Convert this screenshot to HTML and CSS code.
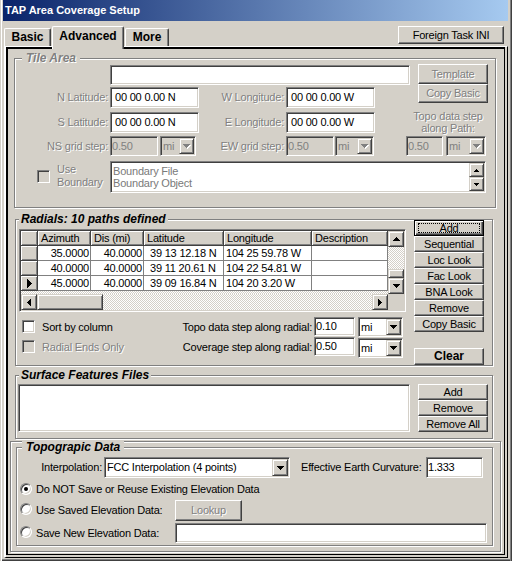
FILE: index.html
```html
<!DOCTYPE html>
<html>
<head>
<meta charset="utf-8">
<title>TAP Area Coverage Setup</title>
<link rel="stylesheet" href="styles.css">
</head>
<body>
<div class="window">
  <div class="titlebar">TAP Area Coverage Setup</div>
  <div class="tabrow">
    <div class="tab t-basic">Basic</div>
    <div class="tab t-adv">Advanced</div>
    <div class="tab t-more">More</div>
    <div class="btn fti">Foreign Task INI</div>
  </div>
  <div class="page">
    <div class="pin">

      <div class="group g-tile">
        <div class="gtitle dis">Tile Area</div>
        <div class="row r-a">
          <div class="tb tb-name"></div>
          <div class="tile-btns">
            <div class="btn dis b-tmpl">Template</div>
            <div class="btn dis b-cpy">Copy Basic</div>
          </div>
        </div>
        <div class="row r-b">
          <div class="lbl dis lw95">N Latitude:</div>
          <div class="tb tb-coord">00 00 0.00 N</div>
          <div class="lbl dis lw87">W Longitude:</div>
          <div class="tb tb-coord">00 00 0.00 W</div>
        </div>
        <div class="row r-c">
          <div class="lbl dis lw95">S Latitude:</div>
          <div class="tb tb-coord">00 00 0.00 N</div>
          <div class="lbl dis lw87">E Longitude:</div>
          <div class="tb tb-coord">00 00 0.00 W</div>
          <div class="topo-path dis">Topo data step<br>along Path:</div>
        </div>
        <div class="row r-d">
          <div class="lbl dis lw95 lh20">NS grid step:</div>
          <div class="tb off tb-step">0.50</div>
          <div class="combo off cb-ns"><span class="cv">mi</span><span class="dd"><svg width="7" height="4" viewBox="0 0 7 4" shape-rendering="crispEdges"><path d="M0 0h7v1H6v1H5v1H4v1H3V3H2V2H1V1H0z"/></svg></span></div>
          <div class="lbl dis lw90 lh20">EW grid step:</div>
          <div class="tb off tb-step">0.50</div>
          <div class="combo off cb-ew"><span class="cv">mi</span><span class="dd"><svg width="7" height="4" viewBox="0 0 7 4" shape-rendering="crispEdges"><path d="M0 0h7v1H6v1H5v1H4v1H3V3H2V2H1V1H0z"/></svg></span></div>
          <div class="tb off tb-pstep">0.50</div>
          <div class="combo off cb-p"><span class="cv">mi</span><span class="dd"><svg width="7" height="4" viewBox="0 0 7 4" shape-rendering="crispEdges"><path d="M0 0h7v1H6v1H5v1H4v1H3V3H2V2H1V1H0z"/></svg></span></div>
        </div>
        <div class="row r-e">
          <div class="chk off chk-ub"></div>
          <div class="ublbl dis">Use<br>Boundary</div>
          <div class="lb lb-bnd">
            <div class="lbitems"><div>Boundary File</div><div>Boundary Object</div></div>
            <div class="lbsb">
              <div class="sbtn sb14"><svg width="5" height="3" viewBox="0 0 5 3" shape-rendering="crispEdges"><path d="M2 0h1v1h1v1h1v1H0V2h1V1h1z"/></svg></div>
              <div class="sbtn sb14"><svg width="5" height="3" viewBox="0 0 5 3" shape-rendering="crispEdges"><path d="M0 0h5v1H4v1H3v1H2V2H1V1H0z"/></svg></div>
            </div>
          </div>
        </div>
      </div>

      <div class="group g-rad">
        <div class="gtitle">Radials: 10 paths defined</div>
        <div class="radbody">
          <div class="radl">
            <div class="grid">
              <div class="gtop">
                <div class="cells">
                  <div class="c fx"></div>
                  <div class="c fx">Azimuth</div>
                  <div class="c fx">Dis (mi)</div>
                  <div class="c fx">Latitude</div>
                  <div class="c fx">Longitude</div>
                  <div class="c fx">Description</div>

                  <div class="c fx"></div>
                  <div class="c num">35.0000</div>
                  <div class="c num">40.0000</div>
                  <div class="c lat">39 13 12.18 N</div>
                  <div class="c">104 25 59.78 W</div>
                  <div class="c"></div>

                  <div class="c fx"></div>
                  <div class="c num">40.0000</div>
                  <div class="c num">40.0000</div>
                  <div class="c lat">39 11 20.61 N</div>
                  <div class="c">104 22 54.81 W</div>
                  <div class="c"></div>

                  <div class="c fx ind"><svg width="5" height="9" viewBox="0 0 5 9" shape-rendering="crispEdges"><path d="M0 0h1v1h1v1h1v1h1v1h1v1H4v1H3v1H2v1H1v1H0z"/></svg></div>
                  <div class="c num">45.0000</div>
                  <div class="c num">40.0000</div>
                  <div class="c lat">39 09 16.84 N</div>
                  <div class="c">104 20 3.20 W</div>
                  <div class="c"></div>
                </div>
                <div class="vsb">
                  <div class="sbtn sb16"><svg width="7" height="4" viewBox="0 0 7 4" shape-rendering="crispEdges"><path d="M3 0h1v1h1v1h1v1h1v1H0V3h1V2h1V1h1z"/></svg></div>
                  <div class="track vtrack"></div>
                  <div class="sbtn vthumb"></div>
                  <div class="sbtn sb16"><svg width="7" height="4" viewBox="0 0 7 4" shape-rendering="crispEdges"><path d="M0 0h7v1H6v1H5v1H4v1H3V3H2V2H1V1H0z"/></svg></div>
                </div>
              </div>
              <div class="gbot">
                <div class="hsb">
                  <div class="sbtn sb16"><svg width="4" height="7" viewBox="0 0 4 7" shape-rendering="crispEdges"><path d="M3 0h1v7H3V6H2V5H1V4H0V3h1V2h1V1h1z"/></svg></div>
                  <div class="sbtn hthumb"></div>
                  <div class="track htrack"></div>
                  <div class="sbtn sb16"><svg width="4" height="7" viewBox="0 0 4 7" shape-rendering="crispEdges"><path d="M0 0h1v1h1v1h1v1h1v1H3v1H2v1H1v1H0z"/></svg></div>
                </div>
                <div class="corner"></div>
              </div>
            </div>
            <div class="urow u1">
              <div class="chk ucb"></div>
              <div class="cbl">Sort by column</div>
              <div class="rlab">Topo data step along radial:</div>
              <div class="tb tb-rs">0.10</div>
              <div class="combo cb-rs"><span class="cv">mi</span><span class="dd"><svg width="7" height="4" viewBox="0 0 7 4" shape-rendering="crispEdges"><path d="M0 0h7v1H6v1H5v1H4v1H3V3H2V2H1V1H0z"/></svg></span></div>
            </div>
            <div class="urow u2">
              <div class="chk off ucb"></div>
              <div class="cbl dis">Radial Ends Only</div>
              <div class="rlab">Coverage step along radial:</div>
              <div class="tb tb-rs">0.50</div>
              <div class="combo cb-rs cb-low"><span class="cv">mi</span><span class="dd"><svg width="7" height="4" viewBox="0 0 7 4" shape-rendering="crispEdges"><path d="M0 0h7v1H6v1H5v1H4v1H3V3H2V2H1V1H0z"/></svg></span></div>
            </div>
          </div>
          <div class="radr">
            <div class="btn b16 def"><span class="focus">Add</span></div>
            <div class="btn b16">Sequential</div>
            <div class="btn b16">Loc Look</div>
            <div class="btn b16">Fac Look</div>
            <div class="btn b16">BNA Look</div>
            <div class="btn b16">Remove</div>
            <div class="btn b16">Copy Basic</div>
            <div class="btn b-clear">Clear</div>
          </div>
        </div>
      </div>

      <div class="group g-surf">
        <div class="gtitle">Surface Features Files</div>
        <div class="row">
          <div class="lb lb-surf"></div>
          <div class="surf-btns">
            <div class="btn b16">Add</div>
            <div class="btn b16">Remove</div>
            <div class="btn b16">Remove All</div>
          </div>
        </div>
      </div>

      <div class="panel">
        <div class="group g-topo">
          <div class="gtitle">Topograpic Data</div>
          <div class="row tr1">
            <div class="lbl lw87i lh20">Interpolation:</div>
            <div class="combo cb-int"><span class="cv">FCC Interpolation (4 points)</span><span class="dd dd16"><svg width="7" height="4" viewBox="0 0 7 4" shape-rendering="crispEdges"><path d="M0 0h7v1H6v1H5v1H4v1H3V3H2V2H1V1H0z"/></svg></span></div>
            <div class="eec">Effective Earth Curvature:</div>
            <div class="tb tb-eec">1.333</div>
          </div>
          <div class="row rr rr1">
            <div class="radio on"></div>
            <div class="rtext">Do NOT Save or Reuse Existing Elevation Data</div>
          </div>
          <div class="row rr rr2">
            <div class="radio"></div>
            <div class="rtext rtw">Use Saved Elevation Data:</div>
            <div class="btn dis b-look">Lookup</div>
          </div>
          <div class="row rr rr3">
            <div class="radio"></div>
            <div class="rtext rtw">Save New Elevation Data:</div>
            <div class="tb tb-save"></div>
          </div>
        </div>
      </div>

    </div>
  </div>
</div>
</body>
</html>
```

FILE: styles.css
```css
* { box-sizing: border-box; }
html, body { margin: 0; padding: 0; }
body {
  width: 512px; height: 561px; overflow: hidden;
  background: #d4d0c8;
  font-family: "Liberation Sans", Arial, sans-serif;
  font-size: 11px; line-height: 13px; letter-spacing: -0.2px;
  color: #000;
}
.window {
  width: 512px; height: 561px;
  box-shadow: inset 1px 0 #d4d0c8, inset 2px 0 #fff,
              inset -1px 0 #404040, inset -2px 0 #808080,
              inset 0 -1px #404040, inset 0 -2px #808080;
}
.titlebar {
  margin: 0 4px 0 3px; height: 21px; padding-left: 2px;
  background: linear-gradient(to right, #0a246a, #a6caf0);
  color: #fff; font-weight: bold; line-height: 21px; letter-spacing: 0;
}

/* tabs */
.tabrow {
  display: flex; align-items: flex-start; height: 25px;
  margin-left: 4px; width: 504px; position: relative; z-index: 2;
}
.tab {
  margin-top: 7px; height: 18px; background: #d4d0c8;
  border: 1px solid #404040; border-left-color: #fff; border-top-color: #fff; border-bottom: 0;
  border-radius: 2px 2px 0 0; box-shadow: inset -1px 0 #808080;
  font-weight: bold; font-size: 12px; line-height: 16px; text-align: center; letter-spacing: 0;
}
.t-basic { width: 47px; }
.t-adv { width: 72px; margin-left: 1px; margin-top: 5px; height: 23px; padding-top: 1px; }
.t-more { width: 44px; margin-left: 1px; }
.fti { margin-left: auto; margin-top: 5px; width: 106px; height: 18px; margin-right: 4px; }

/* page */
.page {
  margin-left: 4px; width: 504px; height: 512px;
  border-style: solid; border-width: 1px 1px 1px 2px;
  border-color: #fff #000 #000 #fff;
  padding: 0 2px 2px 0;
}
.pin {
  height: 100%;
  border-style: solid; border-width: 2px 1px 1px 2px; border-color: #000;
}

/* common controls */
.dis { color: #808080; text-shadow: 1px 1px 0 #fff; }
.btn {
  background: #d4d0c8; border: 1px solid; border-color: #fff #404040 #404040 #fff;
  box-shadow: inset -1px -1px #808080;
  display: flex; align-items: center; justify-content: center;
  white-space: nowrap; line-height: 13px; flex-shrink: 0;
}
.btn.def {
  position: relative; border-color: #000;
  box-shadow: inset 1px 1px #fff, inset -1px -1px #404040, inset -2px -2px #808080;
}
.btn.def .focus::after {
  content: ""; position: absolute; left: 3px; right: 3px; top: 2px; bottom: 2px;
  border: 1px dotted #000;
}
.tb {
  background: #fff; border: 1px solid; border-color: #808080 #fff #fff #808080;
  box-shadow: inset 1px 1px #404040, inset -1px -1px #d4d0c8;
  padding-left: 2px; display: flex; align-items: center;
  white-space: nowrap; overflow: hidden; flex-shrink: 0;
}
.tb.off { background: #d4d0c8; color: #808080; padding-left: 1px; }
.combo {
  display: flex; background: #fff; border: 1px solid; border-color: #808080 #fff #fff #808080;
  box-shadow: inset 1px 1px #404040, inset -1px -1px #d4d0c8;
  padding: 1px; flex-shrink: 0;
}
.combo .cv { flex: 1; padding-left: 1px; line-height: 16px; white-space: nowrap; overflow: hidden; }
.combo .dd {
  width: 15px; background: #d4d0c8; border: 1px solid;
  border-color: #d4d0c8 #404040 #404040 #d4d0c8;
  box-shadow: inset 1px 1px #fff, inset -1px -1px #808080;
  display: flex; align-items: center; justify-content: center;
}
.combo .dd16 { width: 16px; }
.combo.off { background: #d4d0c8; }
.combo.off .cv { color: #808080; }
.combo.off svg { fill: #808080; filter: drop-shadow(1px 1px 0 #fff); }
.chk {
  width: 13px; height: 13px; background: #fff; border: 1px solid;
  border-color: #808080 #fff #fff #808080;
  box-shadow: inset 1px 1px #404040, inset -1px -1px #d4d0c8; flex-shrink: 0;
}
.chk.off { background: #d4d0c8; }
.radio {
  width: 12px; height: 12px; border-radius: 50%; background: #fff;
  border: 1px solid; border-color: #808080 #fff #fff #808080;
  box-shadow: inset 1px 1px #404040, inset -1px -1px #d4d0c8;
  display: flex; align-items: center; justify-content: center;
  flex-shrink: 0; margin: 3px 0 0 3px;
}
.radio.on::after { content: ""; width: 4px; height: 4px; border-radius: 50%; background: #000; }
.lb {
  display: flex; background: #fff; border: 1px solid; border-color: #808080 #fff #fff #808080;
  box-shadow: inset 1px 1px #404040, inset -1px -1px #d4d0c8; padding: 1px; flex-shrink: 0;
}
.sbtn {
  background: #d4d0c8; border: 1px solid; border-color: #d4d0c8 #404040 #404040 #d4d0c8;
  box-shadow: inset 1px 1px #fff, inset -1px -1px #808080;
  display: flex; align-items: center; justify-content: center; flex-shrink: 0;
}
.track {
  background-color: #fff;
  background-image: repeating-conic-gradient(#d4d0c8 0 25%, #fff 0 50%);
  background-size: 2px 2px;
}

/* group boxes */
.group {
  border: 1px solid #808080;
  box-shadow: 1px 1px 0 #fff, inset 1px 1px 0 #fff;
}
.gtitle {
  width: max-content; height: 13px; margin: -7px 0 0 3px; padding: 0 2px;
  background: #d4d0c8; font-weight: bold; font-style: italic;
  font-size: 12px; line-height: 13px; letter-spacing: 0;
}
.panel {
  margin: 2px 0 0 2px; width: 491px; height: 111px;
  border: 1px solid #808080;
  box-shadow: 1px 1px 0 #fff, inset 1px 1px 0 #fff;
}
.row { display: flex; align-items: flex-start; }
.lbl { line-height: 21px; text-align: right; padding-right: 2px; white-space: nowrap; flex-shrink: 0; }
.lh20 { line-height: 20px; }

/* Tile Area */
.g-tile { margin: 9px 0 0 6px; width: 482px; height: 150px; }
.g-tile .gtitle { margin-left: 7px; padding: 0 4px; }
.r-a { height: 22px; }
.tb-name { margin-left: 95px; width: 300px; height: 20px; }
.tile-btns { margin: -1px 0 0 8px; width: 70px; display: flex; flex-direction: column; }
.b-tmpl { height: 20px; }
.b-cpy { height: 19px; }
.r-b { height: 25px; }
.r-c { height: 24px; }
.lw95 { width: 95px; }
.lw87 { width: 87px; }
.lw90 { width: 90px; }
.tb-coord { width: 89px; height: 21px; padding-left: 4px; }
.topo-path { margin: -2px 0 0 30px; width: 86px; line-height: 12px; text-align: center; }
.r-d { height: 25px; }
.tb-step { width: 48px; height: 20px; }
.cb-ns { margin-left: 2px; width: 36px; height: 20px; }
.cb-ew { margin-left: 1px; width: 39px; height: 20px; }
.tb-pstep { margin-left: 32px; width: 37px; height: 20px; }
.cb-p { margin-left: 3px; width: 40px; height: 20px; }
.r-e { height: 32px; }
.chk-ub { margin: 9px 0 0 22px; }
.ublbl { margin: 2px 0 0 7px; width: 53px; line-height: 13px; }
.lb-bnd { width: 376px; height: 32px; }
.lbitems { flex: 1; padding: 2px 0 0 1px; line-height: 12px; color: #7a7a7a; }
.lbsb { width: 15px; display: flex; flex-direction: column; }
.sb14 { height: 14px; }

/* Radials */
.g-rad { margin: 11px 0 0 7px; width: 478px; height: 147px; }
.radbody { display: flex; align-items: flex-start; }
.radl { margin-left: 3px; width: 387px; }
.radr { margin: -6px 0 0 8px; width: 70px; display: flex; flex-direction: column; }
.b16 { height: 16px; }
.b-clear { margin-top: 16px; height: 17px; font-weight: bold; font-size: 12px; letter-spacing: 0; }
.grid {
  width: 387px; height: 83px; margin-top: 3px;
  border: 1px solid; border-color: #808080 #fff #fff #808080;
  box-shadow: inset 1px 1px #404040, inset -1px -1px #d4d0c8; padding: 1px;
}
.gtop { display: flex; height: 63px; }
.cells {
  width: 367px; height: 63px;
  display: grid; grid-template-columns: 17px 53px 53px 80px 88px 76px;
  grid-auto-rows: 15px; align-content: start;
  background-color: #fff;
  background-image: repeating-conic-gradient(#d4d0c8 0 25%, #fff 0 50%);
  background-size: 2px 2px;
}
.c {
  background: #fff; border-right: 1px solid #808080; border-bottom: 1px solid #808080;
  line-height: 14px; white-space: nowrap; overflow: hidden; padding: 0 1px 0 2px;
}
.c.fx {
  background: #d4d0c8; border-right-color: #404040; border-bottom-color: #404040;
  box-shadow: inset 1px 1px #fff, inset -1px -1px #808080; padding-left: 3px;
}
.c.num { text-align: right; }
.c.lat { padding-left: 6px; }
.c.ind { display: flex; align-items: center; justify-content: center; padding: 0; }
.vsb { width: 16px; display: flex; flex-direction: column; }
.sb16 { width: 16px; height: 16px; }
.vtrack { height: 22px; }
.vthumb { height: 9px; }
.gbot { display: flex; height: 16px; }
.hsb { width: 367px; display: flex; }
.hthumb { width: 66px; height: 16px; }
.htrack { flex: 1; }
.corner { width: 16px; background: #d4d0c8; }
.urow { display: flex; align-items: flex-start; height: 20px; }
.u1 { margin-top: 5px; }
.ucb { margin: 3px 0 0 3px; }
.cbl { margin-left: 7px; line-height: 20px; flex: 1; white-space: nowrap; }
.rlab { line-height: 20px; text-align: right; padding-right: 2px; white-space: nowrap; }
.tb-rs { width: 41px; height: 19px; padding-left: 1px; }
.cb-rs { margin-left: 3px; margin-right: 3px; width: 45px; height: 20px; }
.cb-low { margin-top: 1px; }

/* Surface */
.g-surf { margin: 9px 0 0 7px; width: 478px; height: 64px; }
.lb-surf { margin: 2px 0 0 2px; width: 392px; height: 48px; }
.surf-btns { margin: 2px 0 0 8px; width: 70px; display: flex; flex-direction: column; }

/* Topographic */
.g-topo { margin: 5px 0 0 5px; width: 477px; height: 99px; }
.g-topo .gtitle { margin-left: 5px; padding: 0 4px; }
.tr1 { margin-top: 3px; height: 21px; }
.lw87i { width: 87px; }
.cb-int { width: 186px; height: 21px; }
.cb-int .cv { line-height: 17px; }
.eec { margin-left: 11px; width: 125px; line-height: 20px; white-space: nowrap; }
.tb-eec { width: 57px; height: 21px; padding-left: 1px; }
.rr { margin-top: 2px; }
.rr1 { height: 18px; }
.rr2, .rr3 { height: 21px; }
.rtext { margin-left: 4px; white-space: nowrap; }
.rr1 .rtext { line-height: 18px; }
.rr2 .rtext, .rr3 .rtext { line-height: 21px; }
.rtw { width: 139px; }
.b-look { width: 67px; height: 21px; }
.tb-save { width: 312px; height: 20px; }
```
